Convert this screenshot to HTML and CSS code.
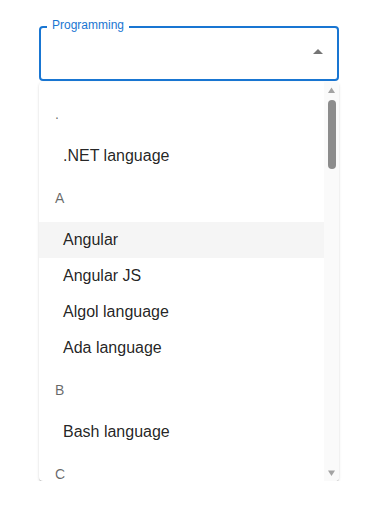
FILE: index.html
```html
<!DOCTYPE html>
<html>
  <head>
    <meta charset="UTF-8" />
    <title>Programming</title>
    <link rel="stylesheet" href="styles.css">
  </head>
  <body>
    <div class="autocomplete">
      <fieldset class="field">
        <legend class="field-label">Programming</legend>
        <div class="field-row">
          <input class="field-input" type="text" />
          <svg
            class="popup-icon"
            viewBox="0 0 24 24"
            xmlns="http://www.w3.org/2000/svg"
          >
            <path d="M7 14l5-5 5 5z" />
          </svg>
        </div>
      </fieldset>

      <div class="popup">
        <ul class="listbox">
          <li class="group">
            <div class="group-label">.</div>
            <ul class="group-items">
              <li class="option">.NET language</li>
            </ul>
          </li>
          <li class="group">
            <div class="group-label">A</div>
            <ul class="group-items">
              <li class="option focused">Angular</li>
              <li class="option">Angular JS</li>
              <li class="option">Algol language</li>
              <li class="option">Ada language</li>
            </ul>
          </li>
          <li class="group">
            <div class="group-label">B</div>
            <ul class="group-items">
              <li class="option">Bash language</li>
            </ul>
          </li>
          <li class="group">
            <div class="group-label">C</div>
          </li>
        </ul>
        <div class="scrollbar">
          <svg class="scroll-arrow" viewBox="0 0 15 15" xmlns="http://www.w3.org/2000/svg">
            <path d="M4 11L7.5 5.5 11 11z" />
          </svg>
          <div class="scroll-thumb"></div>
          <svg class="scroll-arrow down" viewBox="0 0 15 15" xmlns="http://www.w3.org/2000/svg">
            <path d="M4 4.5L7.5 10 11 4.5z" />
          </svg>
        </div>
      </div>
    </div>
  </body>
</html>
```

FILE: styles.css
```css
body {
  font-family: "Liberation Sans", Arial, sans-serif;
  margin: 0;
  padding: 0;
  background-color: #fff;
  color: rgba(0, 0, 0, 0.87);
}
.autocomplete {
  width: 300px;
  padding: 18px 0 0 39px;
}
.field {
  margin: 0;
  padding: 0 7px 0 6px;
  border: 2px solid #1976d2;
  border-radius: 4px;
  min-width: 0;
}
.field-label {
  padding: 0 5px 4px;
  font-size: 12px;
  line-height: 14px;
  color: #1976d2;
}
.field-row {
  height: 43px;
  display: flex;
  align-items: flex-start;
}
.field-input {
  flex-grow: 1;
  min-width: 0;
  border: none;
  outline: none;
  background: transparent;
  font: inherit;
  font-size: 16px;
  height: 24px;
}
.popup-icon {
  width: 24px;
  height: 24px;
  margin-top: 4px;
  fill: rgba(0, 0, 0, 0.54);
  flex-shrink: 0;
}
.popup {
  display: flex;
  height: 399px;
  margin-top: 1px;
  background-color: #fff;
  border-radius: 4px;
  overflow: hidden;
  box-shadow: 0 2px 1px -1px rgba(0, 0, 0, 0.2), 0 1px 1px 0 rgba(0, 0, 0, 0.14),
    0 1px 3px 0 rgba(0, 0, 0, 0.12);
}
.listbox {
  flex-grow: 1;
  margin: 0;
  padding: 8px 0;
  list-style: none;
  overflow: hidden;
}
.group-label {
  padding: 0 16px;
  line-height: 48px;
  font-size: 14px;
  color: rgba(0, 0, 0, 0.6);
}
.group-items {
  margin: 0;
  padding: 0;
  list-style: none;
}
.option {
  padding: 6px 16px 6px 24px;
  font-size: 16px;
  line-height: 24px;
  color: rgba(0, 0, 0, 0.87);
}
.option.focused {
  background-color: #f5f5f5;
}
.scrollbar {
  width: 15px;
  flex-shrink: 0;
  display: flex;
  flex-direction: column;
  background-color: #fafafa;
}
.scroll-arrow {
  width: 15px;
  height: 15px;
  fill: #a3a3a3;
  flex-shrink: 0;
}
.scroll-arrow.down {
  margin-top: auto;
}
.scroll-thumb {
  width: 8px;
  height: 69px;
  margin: 3px auto 0;
  border-radius: 4px;
  background-color: #8c8c8c;
}
```
